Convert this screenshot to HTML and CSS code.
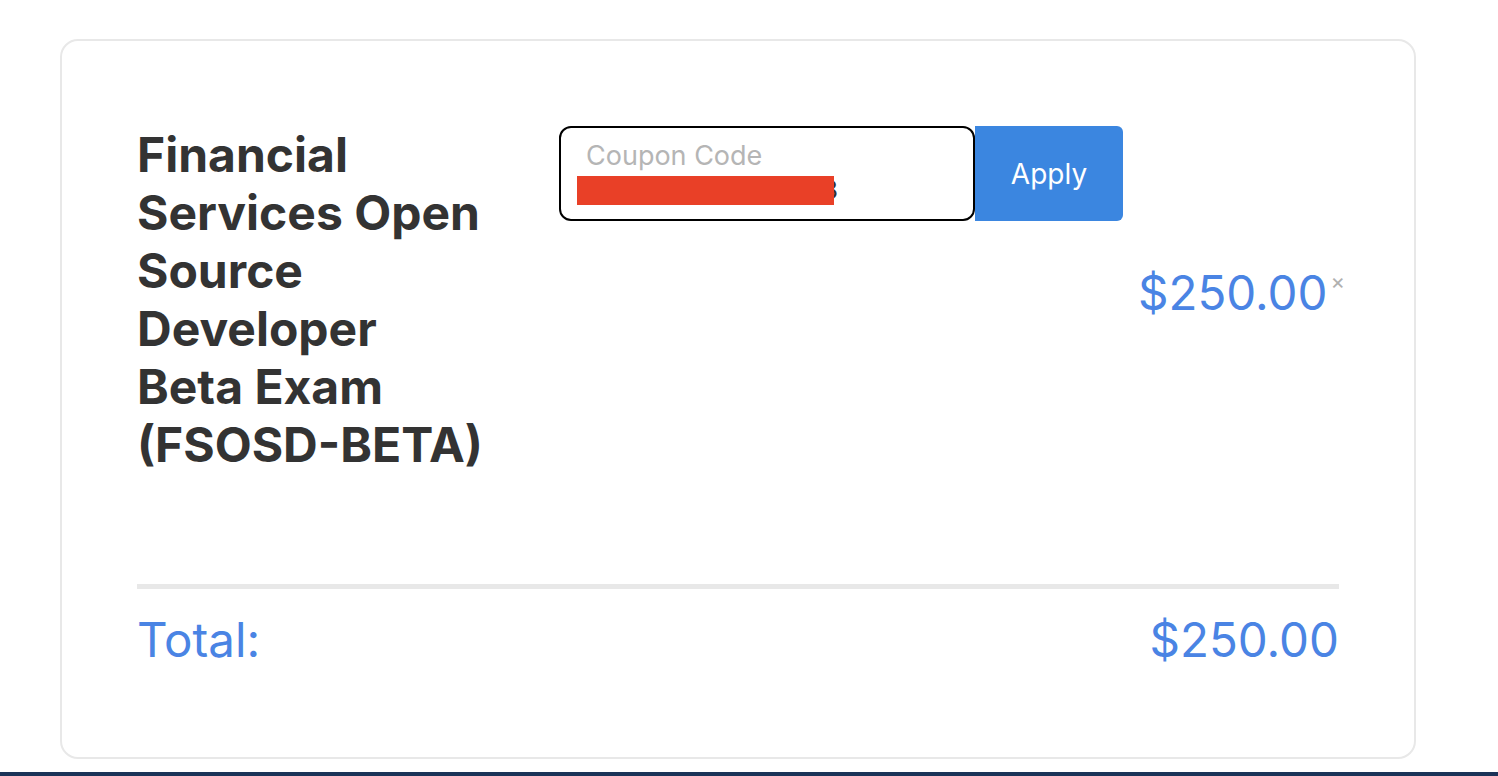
FILE: index.html
```html
<!DOCTYPE html>
<html>
<head>
<meta charset="utf-8">
<link rel="stylesheet" href="styles.css">
</head>
<body>
<div class="page">
  <div class="card">
    <div class="item-row">
      <div class="item-title">Financial Services Open Source Developer Beta Exam (FSOSD-BETA)</div>
      <div class="coupon">
        <div class="coupon-field">
          <span class="coupon-label">Coupon Code</span>
          <span class="coupon-value"><span class="tail">8</span><span class="redact"></span></span>
        </div>
        <button class="apply">Apply</button>
      </div>
      <div class="price-wrap">
        <span class="price">$250.00</span>
        <span class="remove">×</span>
      </div>
    </div>
    <div class="divider"></div>
    <div class="total-row">
      <span class="total-label">Total:</span>
      <span class="total-value">$250.00</span>
    </div>
  </div>
</div>
<div class="footer-bar"></div>
</body>
</html>
```

FILE: styles.css
```css
html, body {
  margin: 0;
  padding: 0;
  background: #ffffff;
  font-family: Inter, "Noto Sans", sans-serif;
}
.page {
  height: 772px;
  padding: 39px 0 0 60px;
  box-sizing: border-box;
}
.card {
  width: 1356px;
  height: 720px;
  box-sizing: border-box;
  border: 2px solid #e8e8e8;
  border-radius: 18px;
  padding: 85px 75px 0 75px;
  display: flex;
  flex-direction: column;
}
.item-row {
  display: flex;
  align-items: center;
}
.item-title {
  width: 372px;
  padding-right: 22px;
  box-sizing: border-box;
  font-size: 48px;
  line-height: 58px;
  font-weight: 700;
  color: #333333;
  align-self: flex-start;
}
.coupon {
  margin-left: 50px;
  display: flex;
  align-self: flex-start;
}
.coupon-field {
  width: 416px;
  height: 95px;
  box-sizing: border-box;
  border: 2px solid #000000;
  border-radius: 12px;
  padding: 12px 0 0 16px;
  display: flex;
  flex-direction: column;
}
.coupon-label {
  font-size: 27px;
  line-height: 32px;
  color: #b5b5b5;
  padding-left: 9px;
}
.coupon-value {
  display: flex;
  align-items: center;
  font-size: 26px;
  line-height: 30px;
  color: #333333;
  margin-top: 3px;
}
.tail {
  order: 2;
  margin-left: -12px;
}
.redact {
  order: 1;
  width: 257px;
  height: 29px;
  background: #e94027;
  position: relative;
  z-index: 1;
}
.apply {
  width: 148px;
  height: 95px;
  border: none;
  border-radius: 0 6px 6px 0;
  background: #3b86e0;
  color: #ffffff;
  font-family: Inter, "Noto Sans", sans-serif;
  font-size: 28px;
  padding: 0;
}
.price-wrap {
  margin-left: auto;
  display: flex;
  align-items: flex-start;
  margin-top: -14px;
}
.price {
  font-size: 47.5px;
  line-height: 56px;
  color: #4a84e4;
}
.remove {
  font-size: 22px;
  line-height: 22px;
  color: #b0b0b0;
  margin-left: 3px;
  margin-top: 5px;
  margin-right: -6px;
}
.divider {
  height: 5px;
  background: #e8e8e8;
  margin-top: 110px;
}
.total-row {
  display: flex;
  justify-content: space-between;
  margin-top: 23px;
  font-size: 47.5px;
  line-height: 56px;
  color: #4a84e4;
}
.footer-bar {
  height: 4px;
  background: #1a3358;
}
```
